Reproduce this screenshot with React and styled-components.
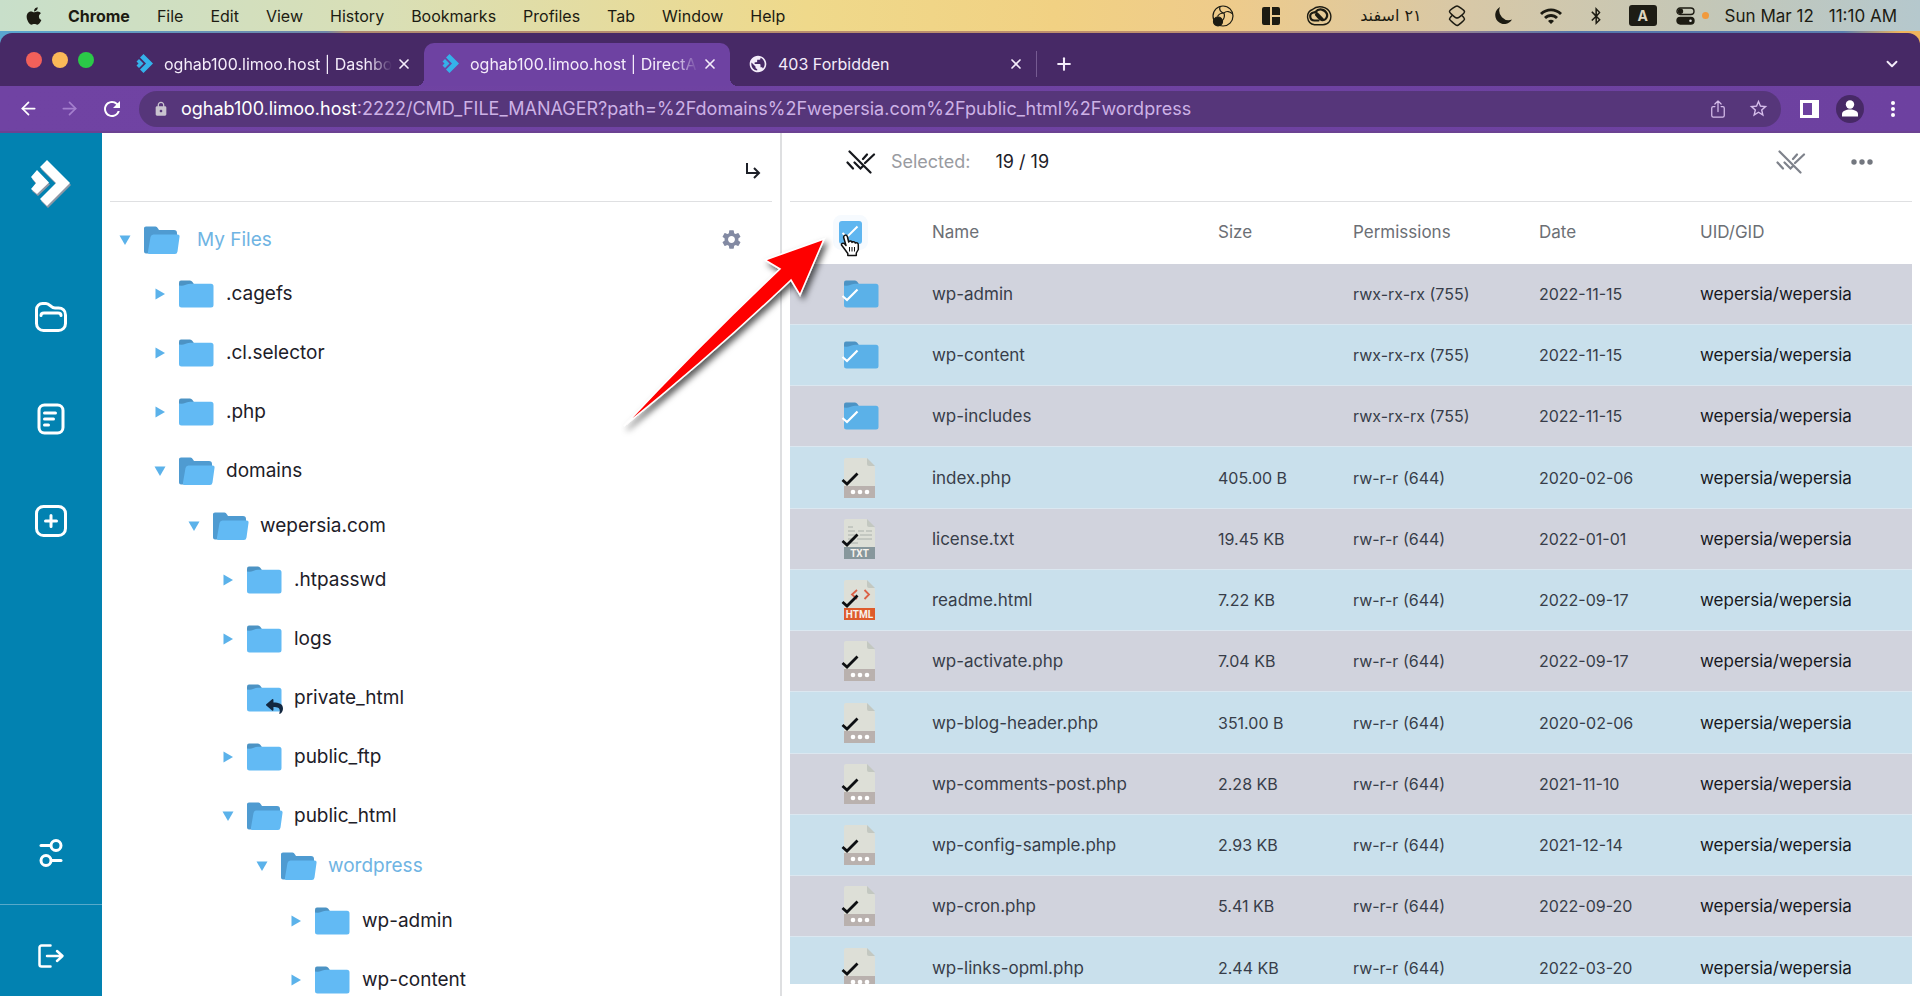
import React from "react";
import styled, { createGlobalStyle, css } from "styled-components";
import { FaApple, FaBluetoothB, FaReply } from "react-icons/fa";
import { MdLock, MdPublic, MdSettings, MdStarBorder, MdRefresh, MdWifi } from "react-icons/md";
import { IoShareOutline } from "react-icons/io5";
import { ArrowLeft, ArrowRight, ChevronDown, Plus, X } from "lucide-react";

const GlobalStyle = createGlobalStyle`
  *, *::before, *::after { box-sizing: border-box; }
  body { margin: 0; font-family: Inter, "Open Sans", sans-serif; color: #1d2028; }
  button { font: inherit; color: inherit; background: none; border: 0; padding: 0; cursor: pointer; }
  ul { list-style: none; margin: 0; padding: 0; }
  a { color: inherit; text-decoration: none; }
  svg { display: block; flex: none; }
`;

const Screen = styled.div`
  height: 100vh;
  display: flex;
  flex-direction: column;
  overflow: hidden;
  background: #fff;
`;

/* ---------- system menu bar ---------- */

const MenuBar = styled.header`
  flex: none;
  height: 31px;
  display: flex;
  align-items: center;
  justify-content: space-between;
  padding: 0 23px 0 24px;
  font-size: 16px;
  line-height: 20px;
  color: #1c1b12;
  background: linear-gradient(90deg, #c8dfca 0%, #d9dfb6 20%, #efd98b 42%, #f1d183 55%, #eecb8b 64%, #d8c8a6 76%, #c2c7b9 90%, #b5c8cd 100%);
`;

const MenuList = styled.nav`
  display: flex;
  align-items: center;
  gap: 24px;
`;

const MenuGroup = styled.div`
  display: flex;
  gap: 27px;
`;

const MenuItem = styled.button`
  font-weight: ${(p) => (p.$strong ? 700 : 400)};
`;

const StatusList = styled.div`
  display: flex;
  align-items: center;
`;

const StatusItem = styled.span`
  display: flex;
  align-items: center;
  justify-content: center;
  margin-left: ${(p) => p.$gap}px;
`;

const Clock = styled.span`
  display: flex;
  gap: 15px;
  font-size: 17px;
`;

const InputSource = styled.span`
  width: 28px;
  height: 21px;
  border-radius: 3px;
  background: #1d1c14;
  color: #ddd5c0;
  font-size: 14px;
  font-weight: 700;
  line-height: 21px;
  text-align: center;
  margin-left: 24px;
`;

const Persian = styled.span`
  font-family: "DejaVu Sans", sans-serif;
  font-size: 16px;
  margin-left: 28px;
`;

const RecordingDot = styled.span`
  width: 7px;
  height: 7px;
  border-radius: 50%;
  background: #f19a3e;
  margin: 0 16px 0 7px;
`;

/* ---------- browser chrome ---------- */

const WindowEdge = styled.div`
  flex: none;
  padding-top: 2px;
  background: linear-gradient(90deg, #5aa6cf 0%, #6f86a8 17%, #b08a70 18%, #c08f6c 60%, #9a8190 75%, #5475ab 82%, #5a7cae 96%, #f0b45c 99%);
`;

const TabStrip = styled.div`
  height: 53px;
  display: flex;
  align-items: flex-end;
  border-radius: 12px 12px 0 0;
  background: #472966;
  color: #f4ecfa;
`;

const TrafficLights = styled.div`
  display: flex;
  align-items: center;
  gap: 10px;
  width: 118px;
  height: 52px;
  padding-left: 26px;
`;

const Light = styled.button`
  width: 16px;
  height: 16px;
  border-radius: 50%;
  background: ${(p) => p.$color};
`;

const Tab = styled.div`
  position: relative;
  display: flex;
  align-items: center;
  height: 43px;
  width: 306px;
  gap: 10px;
  padding: 0 12px 2px 18px;
  font-size: 16px;
  line-height: 20px;
  ${(p) =>
    p.$active &&
    css`
      background: #6e42a2;
      border-radius: 10px 10px 0 0;
      &::before,
      &::after {
        content: "";
        position: absolute;
        bottom: 0;
        width: 8px;
        height: 8px;
      }
      &::before { left: -8px; background: radial-gradient(circle at 0 0, transparent 8px, #6e42a2 8px); }
      &::after { right: -8px; background: radial-gradient(circle at 100% 0, transparent 8px, #6e42a2 8px); }
    `}
`;

const TabTitle = styled.a`
  flex: 1;
  min-width: 0;
  margin-right: -6px;
  white-space: nowrap;
  mask-image: ${(p) => (p.$fade ? "linear-gradient(90deg, #000 calc(100% - 24px), transparent)" : "none")};
`;

const TabSeparator = styled.span`
  width: 1px;
  height: 26px;
  margin: 0 17px 9px 0;
  background: #765b92;
`;

const StripButton = styled.button`
  height: 43px;
  display: flex;
  align-items: center;
  margin-left: ${(p) => (p.$end ? "auto" : "0")};
  padding: 0 ${(p) => (p.$end ? "19px" : "0")} 2px 0;
`;

const Toolbar = styled.div`
  height: 47px;
  display: flex;
  align-items: center;
  padding: 0 23px 0 18px;
  background: linear-gradient(90deg, #7043a3, #6d41a0);
  border-bottom: 2px solid #6b4292;
  color: #fff;
`;

const NavButtons = styled.div`
  display: flex;
  align-items: center;
  gap: 20px;
  width: 121px;
`;

const IconButton = styled.button`
  display: flex;
  color: ${(p) => p.$color || "inherit"};
`;

const Omnibox = styled.label`
  flex: 1;
  min-width: 0;
  display: flex;
  align-items: center;
  height: 36px;
  padding: 0 12px 0 14px;
  border-radius: 18px;
  background: #56367a;
  font-size: 18px;
  line-height: 24px;
  color: #fff;
`;

const Host = styled.span`
  margin-left: 12px;
`;

const UrlInput = styled.input`
  flex: 1;
  min-width: 0;
  padding: 0;
  border: 0;
  outline: 0;
  background: none;
  font: inherit;
  color: #cdb2e6;
`;

const OmniboxActions = styled.span`
  display: flex;
  align-items: center;
  gap: 20px;
  color: #d5bdea;
`;

const ToolbarActions = styled.div`
  display: flex;
  align-items: center;
  gap: 25px;
  margin-left: 19px;
`;

const Avatar = styled.button`
  width: 28px;
  height: 28px;
  margin: 0 0 0 -8px;
  border-radius: 50%;
  background: #472966;
  display: flex;
  align-items: center;
  justify-content: center;
`;

/* ---------- file manager ---------- */

const Workspace = styled.main`
  flex: 1;
  min-height: 0;
  display: grid;
  grid-template-columns: 102px minmax(0, 187fr) minmax(0, 313fr);
`;

const Sidebar = styled.nav`
  display: flex;
  flex-direction: column;
  min-height: 0;
  background: #0282b1;
`;

const BrandLink = styled.a`
  flex: none;
  display: flex;
  justify-content: center;
  height: 133px;
  padding-top: 26px;
`;

const SideButton = styled.button`
  flex: none;
  height: 102px;
  display: flex;
  align-items: center;
  justify-content: center;
  color: #fff;
`;

const SideBottom = styled.div`
  margin-top: auto;
  display: flex;
  flex-direction: column;
`;

const LogoutButton = styled(SideButton)`
  height: 92px;
  padding-top: 10px;
  border-top: 1px solid #57a9ca;
`;

const TreePanel = styled.section`
  min-height: 0;
  overflow: hidden;
  border-right: 2px solid #dedfe1;
`;

const TreeHeader = styled.div`
  height: 69px;
  display: flex;
  align-items: center;
  justify-content: flex-end;
  margin: 0 8px;
  padding: 8px 11px 0 0;
  border-bottom: 1px solid #dfe0e2;
`;

const Tree = styled.ul`
  padding: 8px 37px 0 16px;
`;

const Branch = styled.ul`
  padding-left: ${(p) => (p.$root ? 35 : 34)}px;
  margin-top: -${(p) => p.$pull}px;
`;

const TreeRow = styled.div`
  height: 59px;
  display: flex;
  align-items: center;
`;

const Toggle = styled.button`
  width: 14px;
  height: 20px;
  margin-right: 12px;
  display: flex;
  align-items: center;
  justify-content: center;
`;

const FolderBox = styled.span`
  position: relative;
  width: 36px;
  margin-right: ${(p) => (p.$root ? 17 : 11)}px;
`;

const LinkBadge = styled.span`
  position: absolute;
  right: 0;
  bottom: -3px;
  color: #13273f;
`;

const FolderName = styled.a`
  flex: 1;
  font-size: 19px;
  line-height: 24px;
  color: ${(p) => (p.$active ? "#6fb4e3" : "#1d2028")};
`;

const FilesPanel = styled.section`
  position: relative;
  display: flex;
  flex-direction: column;
  min-height: 0;
  padding: 0 8px 12px;
`;

const FilesHeader = styled.div`
  flex: none;
  height: 69px;
  display: flex;
  align-items: center;
  padding: 0 38px 10px 56px;
  border-bottom: 1px solid #dfe0e2;
  font-size: 18px;
  line-height: 20px;
`;

const SelectedLabel = styled.span`
  margin-left: 15px;
  color: #999ba1;
`;

const SelectedCount = styled.span`
  margin: 0 auto 0 25px;
  white-space: nowrap;
`;

const HeaderButton = styled(IconButton)`
  margin-left: 44px;
`;

const TableClip = styled.div`
  flex: 1;
  min-height: 0;
  overflow: hidden;
`;

const FileTable = styled.table`
  width: 100%;
  table-layout: fixed;
  border-spacing: 0;
  text-align: left;
  font-size: 16px;
  line-height: 20px;
`;

const HeadCell = styled.th`
  width: ${(p) => (p.$width ? `${p.$width}px` : "auto")};
  height: 62px;
  padding: 0 0 2px ${(p) => p.$indent || 0}px;
  font-size: 17px;
  font-weight: 400;
  color: #6c6f75;
`;

const FileRow = styled.tr`
  height: 61px;
  background: #d1d3dd;
  &:nth-child(even) { background: #c9e0ec; }
  &:nth-child(4n) { height: 62px; }
`;

const Cell = styled.td`
  padding: 0 0 0 ${(p) => p.$indent || 0}px;
  border-bottom: 1px solid #dbe7f0;
  color: ${(p) => (p.$dark ? "#16181d" : "#373d49")};
  font-size: ${(p) => (p.$large ? 17 : 16)}px;
  white-space: nowrap;
`;

const IconSlot = styled.label`
  position: relative;
  display: flex;
  width: 36px;
  cursor: pointer;
`;

const Tick = styled.input`
  appearance: none;
  position: absolute;
  inset: 0;
  margin: 0;
`;

const TickMark = styled.span`
  position: absolute;
  left: -3px;
  top: 50%;
  margin-top: -6px;
  color: ${(p) => p.$color};
  pointer-events: none;
`;

const MasterTick = styled.label`
  position: relative;
  display: flex;
  align-items: center;
  justify-content: center;
  width: 23px;
  height: 23px;
  border-radius: 3px;
  background: #5fb6f0;
  box-shadow: 0 0 0 6px #f6fafe;
  color: #fff;
`;

const PointerLayer = styled.span`
  position: absolute;
  left: 1px;
  top: 12px;
  pointer-events: none;
`;

const ArrowLayer = styled.div`
  position: absolute;
  left: -161px;
  top: 95px;
  pointer-events: none;
  z-index: 2;
`;

/* ---------- drawings ---------- */

const Chevrons = () => (
  <svg width="18" height="19" viewBox="0 0 18 19">
    <path d="M7.5 0 17 9.5 7.5 19 4 15.500 10 9.500 4 3.500Z" fill="#35b1ea" />
    <path d="M3 5 7.500 9.500 3 14 .5 11.500 2.500 9.500.5 7.500Z" fill="#35b1ea" />
  </svg>
);

const Brand = () => (
  <svg width="42" height="50" viewBox="0 0 42 50">
    <g fill="#8f97a5" transform="translate(1 2)">
      <path d="M17 1 40 24 17 47 10 40 26 24 10 8Z" />
      <path d="M7 11 19 23.500 7 35 1 30 6 24 1 18Z" />
    </g>
    <g fill="#fff">
      <path d="M17 1 40 24 17 47 10 40 26 24 10 8Z" />
      <path d="M7 11 19 23.500 7 35 1 30 6 24 1 18Z" />
    </g>
  </svg>
);

const line = { fill: "none", stroke: "currentColor", strokeWidth: 3, strokeLinecap: "round", strokeLinejoin: "round" };

const SideFolder = () => (
  <svg width="34" height="32" viewBox="0 0 34 32" {...line}>
    <path d="M2.500 8.500a6 6 0 0 1 6-6h3.500c4 0 4.500 4.500 9 4.500h3.500c4 0 7 2.500 7 7v8.500a7 7 0 0 1-7 7h-15a7 7 0 0 1-7-7Z" />
    <path d="M7 14.500c0-2 1-2.500 3-2.500h14c2 0 3 .5 3 2.500" />
  </svg>
);

const SideDoc = () => (
  <svg width="28" height="32" viewBox="0 0 28 32" {...line}>
    <rect x="2" y="2" width="24" height="28" rx="5.500" />
    <path d="M7.500 10h11M7.500 16h9M7.500 22h4" />
  </svg>
);

const SidePlus = () => (
  <svg width="34" height="34" viewBox="0 0 34 34" {...line}>
    <rect x="2.500" y="2.500" width="29" height="29" rx="7" />
    <path d="M17 11.500v11M11.500 17h11" />
  </svg>
);

const SideSliders = () => (
  <svg width="24" height="30" viewBox="0 0 24 30" {...line}>
    <circle cx="17" cy="7.500" r="5" />
    <path d="M2 7.500h9" />
    <circle cx="7" cy="22.500" r="5" />
    <path d="M13 22.500h9" />
  </svg>
);

const SideLogout = () => (
  <svg width="28" height="26" viewBox="0 0 28 26" {...line} strokeWidth="2.500">
    <path d="M13.500 2.500h-9a2 2 0 0 0-2 2v17a2 2 0 0 0 2 2h9M10 13h15M20 8l5.500 5-5.500 5" />
  </svg>
);

const ReturnArrow = () => (
  <svg width="16" height="18" viewBox="0 0 16 18" fill="none" stroke="#1d2028" strokeWidth="2">
    <path d="M2 1v10h11M9 6l5 5-5 5" />
  </svg>
);

const Deselect = ({ color }) => (
  <svg width="30" height="24" viewBox="0 0 30 24" fill="none" stroke={color} strokeWidth="2.200" strokeLinecap="round">
    <path d="M3.500 1.500 24.500 22.500M1.500 12.500 7 18.500M8.500 12.500l6 6 2.500-2.500M21 4.500l-4 4.500M28 4.500l-9 8.500" />
  </svg>
);

const Dots = ({ vertical, r, gap, color }) => {
  const long = gap * 2 + 8;
  const short = 8;
  return (
    <svg width={vertical ? short : long} height={vertical ? long : short} fill={color}>
      {[0, 1, 2].map((i) => (
        <circle key={i} r={r} cx={vertical ? 4 : 4 + i * gap} cy={vertical ? 4 + i * gap : 4} />
      ))}
    </svg>
  );
};

const Triangle = ({ open }) => (
  <svg width="12" height="12" viewBox="0 0 12 12" fill="#5bb2ea">
    <path d={open ? "M.5 1.500h11L6 11Z" : "M1.500.5v11L11 6Z"} />
  </svg>
);

const Folder = ({ open, shade = "#62baf4" }) => (
  <svg width="36" height="28" viewBox="0 0 36 28">
    {open ? (
      <>
        <path d="M0 2Q0 .5 2 .5h9.500q1.500 0 2.500 2l1 1.500h15q3 0 3 3v7L6 27.500H2q-2 0-2-2Z" fill="#4f9bd1" />
        <path d="M6.500 11q.5-2.500 3-2.500h24q2.500 0 2 2.500l-2 14.500q-.5 2.500-2.500 2.500H5.500q-2 0-1.500-2.500Z" fill="#62baf4" />
      </>
    ) : (
      <>
        <path d="M0 8V2.500Q0 .5 2 .5h9q1.500 0 2.500 1.500l2 3V8Z" fill="#4c93c4" />
        <path d="M0 5.500q4 .5 6-.5t5-1.200H32q2.500 0 2.500 2.500V25q0 2.500-2.500 2.500H2.500Q0 27.500 0 25Z" fill={shade} />
      </>
    )}
  </svg>
);

const FileIcon = ({ kind }) => {
  const band = { txt: "#87979c", html: "#de5b2b", php: "#b9b1ae" }[kind];
  return (
    <svg width="32" height="40" viewBox="0 0 32 40">
      <path d="M0 2q0-2 2-2h20.500L31 9v20H0Z" fill="#dddfd7" />
      <path d="M23 0v6q0 2 2 2h6Z" fill="#c3c8c1" />
      {kind === "txt" && <path d="M4 8h5M4 12h7M14 12h6M22 12h6M4 16h10M16 16h12M4 20h7M13 20h15M4 24h10" stroke="#aab0ab" strokeWidth="1" />}
      {kind === "html" && <path d="M13 10l-5 4.500 5 4.500M20.500 10l4.500 4.500-4.500 4.500" fill="none" stroke="#db6145" strokeWidth="1.800" />}
      <rect y="28" width="31" height="12" fill={band} />
      {kind === "php" ? (
        <g fill="#fff">
          <circle cx="9" cy="34" r="2.300" />
          <circle cx="16" cy="34" r="2.300" />
          <circle cx="23" cy="34" r="2.300" />
        </g>
      ) : (
        <text x="15.500" y="38" textAnchor="middle" fill="#f6f2ec" fontSize="10" fontWeight="700" fontFamily="Roboto, sans-serif">
          {kind.toUpperCase()}
        </text>
      )}
    </svg>
  );
};

const CheckGlyph = ({ width }) => (
  <svg width="18" height="14" viewBox="0 0 18 14" fill="none" stroke="currentColor" strokeWidth={width}>
    <path d="M1.500 8 6 12 16.500 1.500" />
  </svg>
);

const Hand = () => (
  <svg width="22" height="24" viewBox="0 0 22 24" fill="#fff" stroke="#111" strokeWidth="1.500" strokeLinejoin="round">
    <path d="M4.500 2.500C6 1.500 7.300 2.500 7.500 4l1.200 5c.5-1.500 3-1.400 3.300.4.900-1.200 3-.9 3.300.7 1.200-.8 3-.2 3 1.700v4.700l-2 3.500V22.500H7.800V20.500L3.800 15 1.500 12c-.4-1.500 1.500-2.500 3-1.200L6 12.500 3.800 5c-.3-1 0-2 .7-2.500Z" />
    <path d="M9.500 14v4.500M12 14v4.500M14.500 14v4.500" strokeWidth="1" />
  </svg>
);

const RedArrow = () => (
  <svg width="220" height="210" viewBox="0 0 220 210">
    <defs>
      <filter id="arrow-shadow" x="-10%" y="-10%" width="130%" height="130%">
        <feDropShadow dx="3" dy="4" stdDeviation="3" floodColor="#000" floodOpacity=".65" />
      </filter>
    </defs>
    <path
      d="M203 11 144 32 159 41Q78 118 3 198 90 128 170 52L179 67Z"
      fill="#fe0000"
      stroke="#fff"
      strokeWidth="1.500"
      filter="url(#arrow-shadow)"
    />
  </svg>
);

const Obs = () => (
  <svg width="22" height="22" viewBox="0 0 22 22" fill="none" stroke="currentColor" strokeWidth="1.200">
    <circle cx="11" cy="11" r="10" />
    <path d="M8 1.500c-1 3 .5 6 4 6.500 2.500-2.500 6-1.500 8 .5M12 8c1 3 0 6-2 8M5.500 11.500C7 8.500 9.500 8 12 8" />
    <circle cx="6" cy="16.500" r="4.500" fill="currentColor" />
  </svg>
);

const Tiles = () => (
  <svg width="18" height="18" viewBox="0 0 18 18" fill="currentColor">
    <path d="M2 0h6v18H2q-2 0-2-2V2Q0 0 2 0ZM10 0h6q2 0 2 2v6h-8ZM10 10h8v6q0 2-2 2h-6Z" />
  </svg>
);

const CreativeCloud = () => (
  <svg width="26" height="20" viewBox="0 0 26 20" fill="none" stroke="currentColor">
    <path d="M8.500 18.800a8 8 0 0 1-2-15.300C11 -.8 22 -.5 24.500 8c1.500 6-2 10.800-7.500 10.800Z" strokeWidth="1.400" />
    <path d="M12.500 14.500H8.500c-5 0-6-7-1-8 2-.4 3.500.5 4.500 1.700l5 5.300M9.500 6c3.500-4.500 9.500-2.500 11.300 1.500 1.500 4-2 7.500-5.300 6.500-1.500-.4-4-3.500-5.500-5.200" strokeWidth="2.200" strokeLinecap="round" />
  </svg>
);

const Layers = () => (
  <svg width="18" height="22" viewBox="0 0 18 22" fill="none" stroke="currentColor" strokeWidth="1.500" strokeLinejoin="round">
    <path d="M9 1c1 0 7 4 7.500 5.500S10.500 13 9 13 1.500 8 1.500 6.500 8 1 9 1Z" />
    <path d="M4 10.500C2.500 12 1.500 13 1.500 14S8 20.500 9 20.500s7.500-5 7.500-6.500c0-1-1-2-2.500-3.500" />
  </svg>
);

const Moon = () => (
  <svg width="18" height="18" viewBox="0 0 18 18" fill="currentColor">
    <path d="M6 0a9 9 0 1 0 12 12.500A9.500 9.500 0 0 1 6 0Z" />
  </svg>
);

const Switches = () => (
  <svg width="19" height="18" viewBox="0 0 19 18" fill="none" stroke="currentColor" strokeWidth="1.400">
    <rect x="1" y="1" width="17" height="6.500" rx="3.200" />
    <circle cx="4.500" cy="4.200" r="2" fill="currentColor" />
    <rect x="1" y="10.500" width="17" height="6.500" rx="3.200" fill="currentColor" />
    <circle cx="14.500" cy="13.700" r="2" fill="#ddd" />
  </svg>
);

const SidePanelIcon = () => (
  <svg width="19" height="18" viewBox="0 0 19 18">
    <path d="M0 0h19v18H0ZM3 3v12h9V3Z" fill="#fff" fillRule="evenodd" />
  </svg>
);

const Person = () => (
  <svg width="18" height="17" viewBox="0 0 18 17" fill="#fff">
    <circle cx="9" cy="4.500" r="4.200" />
    <path d="M1 16.500V14c0-3 4-4.500 8-4.500s8 1.500 8 4.500v2.500Z" />
  </svg>
);

/* ---------- data ---------- */

const menus = ["Chrome", "File", "Edit", "View", "History", "Bookmarks", "Profiles", "Tab", "Window", "Help"];

const tree = [
  { name: ".cagefs" },
  { name: ".cl.selector" },
  { name: ".php" },
  {
    name: "domains",
    pull: 4,
    children: [
      {
        name: "wepersia.com",
        pull: 5,
        children: [
          { name: ".htpasswd" },
          { name: "logs" },
          { name: "private_html", link: true },
          { name: "public_ftp" },
          {
            name: "public_html",
            pull: 9,
            children: [
              { name: "wordpress", active: true, pull: 4, children: [{ name: "wp-admin" }, { name: "wp-content" }] },
            ],
          },
        ],
      },
    ],
  },
];

const files = [
  ["wp-admin", "", "rwx-rx-rx (755)", "2022-11-15", "dir"],
  ["wp-content", "", "rwx-rx-rx (755)", "2022-11-15", "dir"],
  ["wp-includes", "", "rwx-rx-rx (755)", "2022-11-15", "dir"],
  ["index.php", "405.00 B", "rw-r-r (644)", "2020-02-06", "php"],
  ["license.txt", "19.45 KB", "rw-r-r (644)", "2022-01-01", "txt"],
  ["readme.html", "7.22 KB", "rw-r-r (644)", "2022-09-17", "html"],
  ["wp-activate.php", "7.04 KB", "rw-r-r (644)", "2022-09-17", "php"],
  ["wp-blog-header.php", "351.00 B", "rw-r-r (644)", "2020-02-06", "php"],
  ["wp-comments-post.php", "2.28 KB", "rw-r-r (644)", "2021-11-10", "php"],
  ["wp-config-sample.php", "2.93 KB", "rw-r-r (644)", "2021-12-14", "php"],
  ["wp-cron.php", "5.41 KB", "rw-r-r (644)", "2022-09-20", "php"],
  ["wp-links-opml.php", "2.44 KB", "rw-r-r (644)", "2022-03-20", "php"],
];

function TreeNode({ node, root }) {
  const open = Boolean(node.children);
  return (
    <li>
      <TreeRow>
        <Toggle aria-label={`Toggle ${node.name}`}>{!node.link && <Triangle open={open} />}</Toggle>
        <FolderBox $root={root}>
          <Folder open={open} />
          {node.link && (
            <LinkBadge>
              <FaReply size={17} />
            </LinkBadge>
          )}
        </FolderBox>
        <FolderName href="#folder" $active={node.active}>
          {node.name}
        </FolderName>
        {root && (
          <IconButton aria-label="Tree settings" $color="#838aa3">
            <MdSettings size={23} />
          </IconButton>
        )}
      </TreeRow>
      {open && (
        <Branch $root={root} $pull={node.pull}>
          {node.children.map((child) => (
            <TreeNode key={child.name} node={child} />
          ))}
        </Branch>
      )}
    </li>
  );
}

function BrowserTab({ icon, title, active, fade }) {
  return (
    <Tab $active={active}>
      {icon}
      <TabTitle href="#tab" $fade={fade}>{title}</TabTitle>
      <IconButton aria-label="Close tab">
        <X size={16} strokeWidth={2.5} />
      </IconButton>
    </Tab>
  );
}

export default function App() {
  return (
    <Screen>
      <GlobalStyle />
      <MenuBar>
        <MenuList>
          <FaApple size={20} />
          <MenuGroup>
            {menus.map((m, i) => (
              <MenuItem key={m} $strong={i === 0}>
                {m}
              </MenuItem>
            ))}
          </MenuGroup>
        </MenuList>
        <StatusList>
          <StatusItem $gap={0}><Obs /></StatusItem>
          <StatusItem $gap={28}><Tiles /></StatusItem>
          <StatusItem $gap={26}><CreativeCloud /></StatusItem>
          <Persian lang="fa" dir="rtl">۲۱ اسفند</Persian>
          <StatusItem $gap={26}><Layers /></StatusItem>
          <StatusItem $gap={28}><Moon /></StatusItem>
          <StatusItem $gap={27}><MdWifi size={24} /></StatusItem>
          <StatusItem $gap={24}><FaBluetoothB size={18} /></StatusItem>
          <InputSource>A</InputSource>
          <StatusItem $gap={19}><Switches /></StatusItem>
          <RecordingDot />
          <Clock>
            <span>Sun Mar 12</span>
            <span>11:10 AM</span>
          </Clock>
        </StatusList>
      </MenuBar>

      <WindowEdge>
        <TabStrip>
          <TrafficLights>
            <Light $color="#f2605a" aria-label="Close window" />
            <Light $color="#fbb858" aria-label="Minimise window" />
            <Light $color="#2bc948" aria-label="Zoom window" />
          </TrafficLights>
          <BrowserTab icon={<Chevrons />} title="oghab100.limoo.host | Dashboa" fade />
          <BrowserTab icon={<Chevrons />} title="oghab100.limoo.host | DirectAd" active fade />
          <BrowserTab icon={<MdPublic size={20} />} title="403 Forbidden" />
          <TabSeparator />
          <StripButton aria-label="New tab">
            <Plus size={20} strokeWidth={2.5} />
          </StripButton>
          <StripButton $end aria-label="Search tabs">
            <ChevronDown size={18} strokeWidth={2.5} />
          </StripButton>
        </TabStrip>
      </WindowEdge>
      <Toolbar>
        <NavButtons>
          <IconButton aria-label="Back"><ArrowLeft size={21} /></IconButton>
          <IconButton aria-label="Forward" $color="#a47fcd"><ArrowRight size={21} /></IconButton>
          <IconButton aria-label="Reload"><MdRefresh size={24} /></IconButton>
        </NavButtons>
        <Omnibox>
          <MdLock size={16} color="#c9c4cf" />
          <Host>oghab100.limoo.host</Host>
          <UrlInput
            aria-label="Address"
            defaultValue=":2222/CMD_FILE_MANAGER?path=%2Fdomains%2Fwepersia.com%2Fpublic_html%2Fwordpress"
          />
          <OmniboxActions>
            <IoShareOutline size={20} />
            <MdStarBorder size={21} />
          </OmniboxActions>
        </Omnibox>
        <ToolbarActions>
          <IconButton aria-label="Side panel"><SidePanelIcon /></IconButton>
          <Avatar aria-label="Profile"><Person /></Avatar>
          <IconButton aria-label="Browser menu"><Dots vertical r={2} gap={6} color="#fff" /></IconButton>
        </ToolbarActions>
      </Toolbar>

      <Workspace>
        <Sidebar>
          <BrandLink href="#home" aria-label="Home"><Brand /></BrandLink>
          <SideButton aria-label="Files"><SideFolder /></SideButton>
          <SideButton aria-label="Editor"><SideDoc /></SideButton>
          <SideButton aria-label="Add"><SidePlus /></SideButton>
          <SideBottom>
            <SideButton aria-label="Options"><SideSliders /></SideButton>
            <LogoutButton aria-label="Log out"><SideLogout /></LogoutButton>
          </SideBottom>
        </Sidebar>

        <TreePanel>
          <TreeHeader>
            <IconButton aria-label="Go to path"><ReturnArrow /></IconButton>
          </TreeHeader>
          <Tree>
            <TreeNode root node={{ name: "My Files", active: true, pull: 5, children: tree }} />
          </Tree>
        </TreePanel>

        <FilesPanel>
          <FilesHeader>
            <IconButton aria-label="Clear selection"><Deselect color="#15171c" /></IconButton>
            <SelectedLabel>Selected:</SelectedLabel>
            <SelectedCount>19 / 19</SelectedCount>
            <HeaderButton aria-label="Deselect all"><Deselect color="#7e828b" /></HeaderButton>
            <HeaderButton aria-label="More actions"><Dots r={2.7} gap={8} color="#73777f" /></HeaderButton>
          </FilesHeader>
          <TableClip>
            <FileTable>
              <thead>
                <tr>
                  <HeadCell $width={142} $indent={49}>
                    <MasterTick>
                      <Tick type="checkbox" defaultChecked aria-label="Select all" />
                      <CheckGlyph width={2} />
                      <PointerLayer><Hand /></PointerLayer>
                    </MasterTick>
                  </HeadCell>
                  <HeadCell>Name</HeadCell>
                  <HeadCell $width={135}>Size</HeadCell>
                  <HeadCell $width={186}>Permissions</HeadCell>
                  <HeadCell $width={161}>Date</HeadCell>
                  <HeadCell $width={212}>UID/GID</HeadCell>
                </tr>
              </thead>
              <tbody>
                {files.map(([name, size, mode, date, kind]) => (
                  <FileRow key={name}>
                    <Cell $indent={54}>
                      <IconSlot>
                        {kind === "dir" ? <Folder shade="#5bb1e8" /> : <FileIcon kind={kind} />}
                        <Tick type="checkbox" defaultChecked aria-label={name} />
                        <TickMark $color={kind === "dir" ? "#fff" : "#0d0f12"}>
                          <CheckGlyph width={kind === "dir" ? 2.2 : 2.8} />
                        </TickMark>
                      </IconSlot>
                    </Cell>
                    <Cell $large>{name}</Cell>
                    <Cell>{size}</Cell>
                    <Cell>{mode}</Cell>
                    <Cell>{date}</Cell>
                    <Cell $large $dark>wepersia/wepersia</Cell>
                  </FileRow>
                ))}
              </tbody>
            </FileTable>
          </TableClip>
          <ArrowLayer><RedArrow /></ArrowLayer>
        </FilesPanel>
      </Workspace>
    </Screen>
  );
}
